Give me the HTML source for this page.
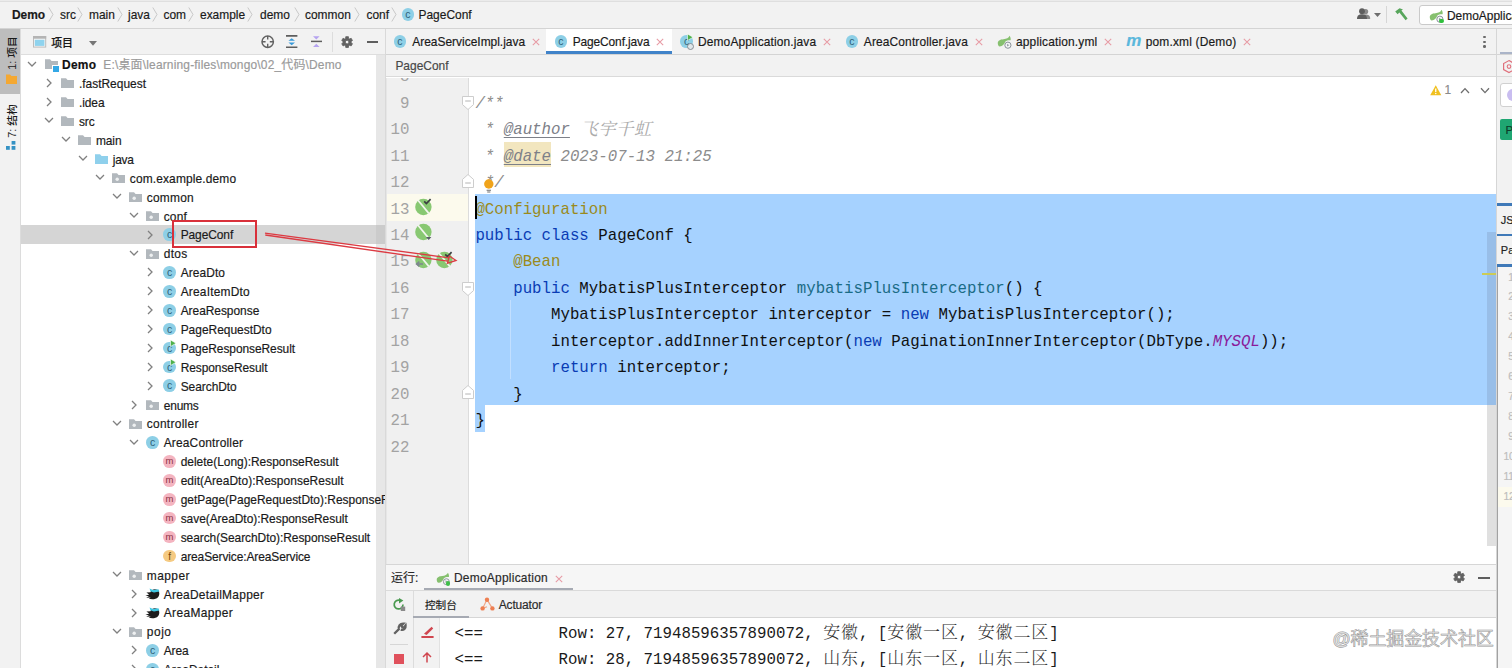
<!DOCTYPE html>
<html lang="zh-CN"><head><meta charset="utf-8"><title>PageConf - Demo</title>
<style>
*{box-sizing:border-box;margin:0;padding:0}
html,body{width:1512px;height:668px;overflow:hidden;background:#fff}
body{position:relative;font-family:"Liberation Sans","Noto Sans CJK SC",sans-serif;font-size:12px;color:#1c1c1c}
.a{position:absolute}
.t{position:absolute;white-space:pre;line-height:16px;height:16px;-webkit-text-stroke:0.18px currentColor}
svg{position:absolute;overflow:visible}
.mono{font-family:"Liberation Mono","Noto Serif CJK SC",monospace}
.ln{position:absolute;left:386px;width:22.5px;text-align:right;font-family:"Liberation Mono","Noto Serif CJK SC",monospace;font-size:15.75px;color:#a3a3a3;line-height:26.45px;height:26.45px;white-space:pre}
.cl{position:absolute;left:475.4px;font-family:"Liberation Mono","Noto Serif CJK SC",monospace;font-size:15.75px;color:#101010;line-height:26.45px;height:26.45px;white-space:pre}
.k{color:#0a3cb4}.an{color:#9a8a1c}.m{color:#1a6c86}.c{color:#8c8c8c;font-style:italic}.p{color:#8a1a9a;font-style:italic}
.tag{text-decoration:underline;text-decoration-skip-ink:none;text-underline-offset:3.2px;text-decoration-thickness:1.2px;color:#7d8088;font-style:italic}
.co{position:absolute;left:454.6px;font-family:"Liberation Mono","Noto Serif CJK SC",monospace;font-size:15.75px;color:#1a1a1a;line-height:26px;height:26px;white-space:pre}
.cj{font-family:"Noto Serif CJK SC",serif;font-size:17px;letter-spacing:0.86px;color:#333;font-weight:300}
.x{position:absolute;width:8px;height:8px}
</style></head>
<body>
<div class="a" style="left:0px;top:0px;width:1512px;height:28px;background:#f2f2f2;"></div>
<div class="a" style="left:0px;top:0px;width:1512px;height:1px;background:#ebebeb;"></div>
<div class="a" style="left:0px;top:1px;width:1512px;height:1px;background:#dfdfdf;"></div>
<div class="a" style="left:0px;top:28px;width:1512px;height:1px;background:#d4d4d4;"></div>
<div class="t" style="left:12px;top:6.5px;font-size:11.95px;color:#1a1a1a;font-weight:bold;">Demo</div>
<div class="t" style="left:60px;top:6.5px;font-size:11.95px;color:#1a1a1a;">src</div>
<div class="t" style="left:89px;top:6.5px;font-size:11.95px;color:#1a1a1a;">main</div>
<div class="t" style="left:128px;top:6.5px;font-size:11.95px;color:#1a1a1a;">java</div>
<div class="t" style="left:163.5px;top:6.5px;font-size:11.95px;color:#1a1a1a;">com</div>
<div class="t" style="left:200px;top:6.5px;font-size:11.95px;color:#1a1a1a;">example</div>
<div class="t" style="left:260px;top:6.5px;font-size:11.95px;color:#1a1a1a;">demo</div>
<div class="t" style="left:305px;top:6.5px;font-size:11.95px;color:#1a1a1a;">common</div>
<div class="t" style="left:366.5px;top:6.5px;font-size:11.95px;color:#1a1a1a;">conf</div>
<svg style="left:48px;top:7px" width="6" height="15" viewBox="0 0 6 15"><path d="M0.8 0.5 L5 7.5 L0.8 14.5" fill="none" stroke="#c3c3c3" stroke-width="0.9"/></svg>
<svg style="left:77px;top:7px" width="6" height="15" viewBox="0 0 6 15"><path d="M0.8 0.5 L5 7.5 L0.8 14.5" fill="none" stroke="#c3c3c3" stroke-width="0.9"/></svg>
<svg style="left:117px;top:7px" width="6" height="15" viewBox="0 0 6 15"><path d="M0.8 0.5 L5 7.5 L0.8 14.5" fill="none" stroke="#c3c3c3" stroke-width="0.9"/></svg>
<svg style="left:152px;top:7px" width="6" height="15" viewBox="0 0 6 15"><path d="M0.8 0.5 L5 7.5 L0.8 14.5" fill="none" stroke="#c3c3c3" stroke-width="0.9"/></svg>
<svg style="left:188.2px;top:7px" width="6" height="15" viewBox="0 0 6 15"><path d="M0.8 0.5 L5 7.5 L0.8 14.5" fill="none" stroke="#c3c3c3" stroke-width="0.9"/></svg>
<svg style="left:246.6px;top:7px" width="6" height="15" viewBox="0 0 6 15"><path d="M0.8 0.5 L5 7.5 L0.8 14.5" fill="none" stroke="#c3c3c3" stroke-width="0.9"/></svg>
<svg style="left:293.6px;top:7px" width="6" height="15" viewBox="0 0 6 15"><path d="M0.8 0.5 L5 7.5 L0.8 14.5" fill="none" stroke="#c3c3c3" stroke-width="0.9"/></svg>
<svg style="left:354.4px;top:7px" width="6" height="15" viewBox="0 0 6 15"><path d="M0.8 0.5 L5 7.5 L0.8 14.5" fill="none" stroke="#c3c3c3" stroke-width="0.9"/></svg>
<svg style="left:391.2px;top:7px" width="6" height="15" viewBox="0 0 6 15"><path d="M0.8 0.5 L5 7.5 L0.8 14.5" fill="none" stroke="#c3c3c3" stroke-width="0.9"/></svg>
<div class="a" style="left:401.5px;top:8.1px;width:12.8px;height:12.8px;border-radius:50%;background:#8dcfe6;color:#2d5f78;font-size:10.5px;line-height:13.8px;text-align:center">c</div>
<div class="t" style="left:418.5px;top:6.5px;font-size:11.95px;color:#1a1a1a;">PageConf</div>
<svg style="left:1357px;top:8px" width="14" height="12" viewBox="0 0 14 12"><circle cx="8.6" cy="3.6" r="2.6" fill="#8a8a8a"/><path d="M4 11 C4 7.6 6 6.6 8.6 6.6 C11.4 6.6 13.2 7.6 13.2 11 Z" fill="#8a8a8a"/><circle cx="5" cy="3.2" r="2.9" fill="#5e5e5e"/><path d="M0 11 C0 7.2 2.2 6.2 5 6.2 C7.8 6.2 10 7.2 10 11 Z" fill="#5e5e5e"/></svg>
<svg style="left:1374px;top:13px" width="7" height="4" viewBox="0 0 7 4"><path d="M0 0 H7 L3.5 4 Z" fill="#6e6e6e"/></svg>
<div class="a" style="left:1385.5px;top:6px;width:1px;height:17px;background:#d6d6d6;"></div>
<svg style="left:1393px;top:7px" width="16" height="15" viewBox="0 0 16 15"><path d="M2.2 4.6 L6.6 1.2 L10 2.4 L8.4 3.6 L14.6 11.4 L12.6 13.2 L6.4 5.6 L4.6 7.2 Z" fill="#58a65c"/></svg>
<div class="a" style="left:1419px;top:5px;width:110px;height:20.4px;background:#fff;border:1px solid #cacaca;border-radius:3px"></div>
<svg style="left:1428.5px;top:9px" width="16" height="14" viewBox="0 0 16 14"><path d="M0.8 8.4 C0.6 5.8 3 4.4 6.4 4.2 C9.6 4 11.6 3 12.6 0.8 C13.6 2.4 13.9 4 13.6 5.2 C11.4 5 9.6 5.4 8.4 6.6 C7.2 9.4 5.4 11.4 2.8 11.4 C1.5 11.2 0.9 10 0.8 8.4 Z" fill="#86c06f"/><circle cx="10.9" cy="10.2" r="3.1" fill="#f4f6f6" stroke="#8a9299" stroke-width="1"/><path d="M10 8.8 L12.4 10.2 L10 11.6 Z" fill="#9aa2a8"/></svg>
<div class="a" style="left:1439.2px;top:18.7px;width:4.6px;height:4.6px;background:#2fc03c;border-radius:50%"></div>
<div class="t" style="left:1447px;top:7.5px;font-size:11.95px;color:#1a1a1a;">DemoApplication</div>
<div class="a" style="left:0px;top:29px;width:20.5px;height:639px;background:#f2f2f2;"></div>
<div class="a" style="left:0px;top:29px;width:20.5px;height:65px;background:#bdbdbd;"></div>
<div class="a" style="left:20px;top:29px;width:1px;height:639px;background:#dcdcdc;"></div>
<div class="a" style="left:0;top:36px;width:20px;height:33px;"><div style="position:absolute;left:11.6px;top:16.5px;transform:translate(-50%,-50%) rotate(-90deg);white-space:pre;font-size:10.7px;color:#1a1a1a;line-height:14px;font-weight:500">1: 项目</div></div>
<svg style="left:5.5px;top:74px" width="11" height="10" viewBox="0 0 11 10"><path d="M0 0.5 H4 L5.4 2 H11 V10 H0 Z" fill="#f4a832"/></svg>
<div class="a" style="left:0;top:104px;width:20px;height:33px;"><div style="position:absolute;left:11.6px;top:16.5px;transform:translate(-50%,-50%) rotate(-90deg);white-space:pre;font-size:10.7px;color:#1a1a1a;line-height:14px;font-weight:500">7: 结构</div></div>
<svg style="left:6.3px;top:141px" width="10" height="9" viewBox="0 0 10 9"><rect x="5.6" y="0" width="3.8" height="3.6" fill="#3592c4"/><rect x="0" y="5" width="3.8" height="3.8" fill="#3592c4"/><rect x="5.6" y="5" width="3.8" height="3.8" fill="#3592c4"/></svg>
<div class="a" style="left:21px;top:29px;width:364px;height:25.5px;background:#f2f2f2;"></div>
<div class="a" style="left:21px;top:54px;width:364px;height:1px;background:#dedede;"></div>
<svg style="left:33px;top:36.2px" width="13.2" height="11.6" viewBox="0 0 13.2 11.6"><rect x="0.5" y="0.5" width="12.2" height="10.6" fill="#f4f4f4" stroke="#bcbcbc" stroke-width="1"/><rect x="0" y="0" width="13.2" height="2.7" fill="#b4b4b4"/><rect x="1.8" y="3.8" width="9.6" height="6.1" fill="#8fd3ee"/></svg>
<div class="t" style="left:51.2px;top:34.9px;font-size:10.9px;color:#1a1a1a;font-weight:500;">项目</div>
<svg style="left:88.8px;top:40.6px" width="8" height="4.8" viewBox="0 0 8 4.8"><path d="M0 0 H8 L4 4.8 Z" fill="#767676"/></svg>
<svg style="left:260.8px;top:35px" width="13.4" height="13.4" viewBox="0 0 13.4 13.4"><circle cx="6.7" cy="6.7" r="5.7" fill="none" stroke="#626262" stroke-width="1.5"/><path d="M6.7 1 V4.6 M6.7 8.8 V12.4 M1 6.7 H4.6 M8.8 6.7 H12.4" stroke="#626262" stroke-width="1.4"/></svg>
<svg style="left:286.3px;top:35px" width="11.4" height="13" viewBox="0 0 11.4 13"><path d="M0 0.9 H11.4 M0 12.2 H11.4" stroke="#5e5e5e" stroke-width="1.6"/><path d="M5.7 3.2 L9 5.7 H2.4 Z M5.7 10.2 L9 7.6 H2.4 Z" fill="#3a9ad9"/></svg>
<svg style="left:311px;top:35px" width="11" height="13" viewBox="0 0 11 13"><path d="M0 6.4 H11" stroke="#5e5e5e" stroke-width="1.5"/><path d="M2 1.2 H8.6 L5.3 4.4 Z M2 12 H8.6 L5.3 8.7 Z" fill="#b5a3f0"/></svg>
<div class="a" style="left:332px;top:31.7px;width:1px;height:20px;background:#dddddd;"></div>
<svg style="left:341.3px;top:35.7px" width="12.2" height="12.2" viewBox="0 0 12.2 12.2"><path d="M4.66 2.26 L4.77 0.66 L7.43 0.66 L7.54 2.26 L8.70 2.93 L10.15 2.23 L11.48 4.53 L10.15 5.43 L10.15 6.77 L11.48 7.67 L10.15 9.97 L8.70 9.27 L7.54 9.94 L7.43 11.54 L4.77 11.54 L4.66 9.94 L3.50 9.27 L2.05 9.97 L0.72 7.67 L2.05 6.77 L2.05 5.43 L0.72 4.53 L2.05 2.23 L3.50 2.93 Z M4.30 6.10 a1.80 1.80 0 1 0 3.60 0 a1.80 1.80 0 1 0 -3.60 0 Z" fill="#626262" fill-rule="evenodd" stroke="#626262" stroke-width="0.8" stroke-linejoin="round"/></svg>
<div class="a" style="left:366.5px;top:41px;width:11.7px;height:2px;background:#5e5e5e;"></div>
<div class="a" style="left:21px;top:55px;width:355px;height:613px;background:#fff;"></div>
<div class="a" style="left:375.6px;top:55px;width:9.4px;height:613px;background:#e7e7e7;"></div>
<div class="a" style="left:385px;top:29px;width:1px;height:639px;background:#d9d9d9;"></div>
<div class="a" style="left:21px;top:225.3px;width:364px;height:18.4px;background:#d5d5d5;"></div>
<div class="a" style="left:376px;top:225.3px;width:9px;height:18.4px;background:#cbcbcb;"></div>
<div class="a" style="left:21px;top:55px;width:364px;height:613px;overflow:hidden">
<svg style="left:5.8px;top:3.7px" width="10" height="10" viewBox="0 0 10 10"><path d="M1 3 L5 7 L9 3" fill="none" stroke="#808080" stroke-width="1.25"/></svg>
<svg style="left:23.5px;top:3px" width="13" height="12" viewBox="0 0 13 12"><path d="M0 1.2 H5 L6.6 3 H13 V11 H0 Z" fill="#b2b8bd"/></svg>
<div class="a" style="left:31px;top:10.3px;width:5.5px;height:5.5px;background:#34a8e6;border:0.8px solid #fff;box-sizing:content-box"></div>
<div class="t" style="left:41px;top:2.1px;font-size:11.95px;color:#111;"><b style="letter-spacing:0.3px">Demo</b><span style="color:#9a9a9a;font-weight:normal;letter-spacing:0.18px">  E:\桌面\learning-files\mongo\02_代码\Demo</span></div>
<svg style="left:22.75px;top:23.4px" width="10" height="10" viewBox="0 0 10 10"><path d="M3 1 L7 5 L3 9" fill="none" stroke="#808080" stroke-width="1.3"/></svg>
<svg style="left:40.45px;top:22.4px" width="13" height="12" viewBox="0 0 13 12"><path d="M0 1.2 H5 L6.6 3 H13 V11 H0 Z" fill="#b2b8bd"/></svg>
<div class="t" style="left:57.95px;top:21.2px;font-size:11.95px;color:#1a1a1a;">.fastRequest</div>
<svg style="left:22.75px;top:42.3px" width="10" height="10" viewBox="0 0 10 10"><path d="M3 1 L7 5 L3 9" fill="none" stroke="#808080" stroke-width="1.3"/></svg>
<svg style="left:40.45px;top:41.3px" width="13" height="12" viewBox="0 0 13 12"><path d="M0 1.2 H5 L6.6 3 H13 V11 H0 Z" fill="#b2b8bd"/></svg>
<div class="t" style="left:57.95px;top:40.1px;font-size:11.95px;color:#1a1a1a;letter-spacing:-0.06px;">.idea</div>
<svg style="left:22.75px;top:60.4px" width="10" height="10" viewBox="0 0 10 10"><path d="M1 3 L5 7 L9 3" fill="none" stroke="#808080" stroke-width="1.25"/></svg>
<svg style="left:40.45px;top:60.2px" width="13" height="12" viewBox="0 0 13 12"><path d="M0 1.2 H5 L6.6 3 H13 V11 H0 Z" fill="#b2b8bd"/></svg>
<div class="t" style="left:57.95px;top:59px;font-size:11.95px;color:#1a1a1a;letter-spacing:-0.11px;">src</div>
<svg style="left:39.7px;top:79.3px" width="10" height="10" viewBox="0 0 10 10"><path d="M1 3 L5 7 L9 3" fill="none" stroke="#808080" stroke-width="1.25"/></svg>
<svg style="left:57.4px;top:79.1px" width="13" height="12" viewBox="0 0 13 12"><path d="M0 1.2 H5 L6.6 3 H13 V11 H0 Z" fill="#b2b8bd"/></svg>
<div class="t" style="left:74.9px;top:77.9px;font-size:11.95px;color:#1a1a1a;letter-spacing:-0.08px;">main</div>
<svg style="left:56.65px;top:98.2px" width="10" height="10" viewBox="0 0 10 10"><path d="M1 3 L5 7 L9 3" fill="none" stroke="#808080" stroke-width="1.25"/></svg>
<svg style="left:74.35px;top:98px" width="13" height="12" viewBox="0 0 13 12"><path d="M0 1.2 H5 L6.6 3 H13 V11 H0 Z" fill="#8fd0ec"/></svg>
<div class="t" style="left:91.85px;top:96.8px;font-size:11.95px;color:#1a1a1a;letter-spacing:-0.31px;">java</div>
<svg style="left:73.6px;top:117.1px" width="10" height="10" viewBox="0 0 10 10"><path d="M1 3 L5 7 L9 3" fill="none" stroke="#808080" stroke-width="1.25"/></svg>
<svg style="left:91.3px;top:116.9px" width="13" height="12" viewBox="0 0 13 12"><path d="M0 1.2 H5 L6.6 3 H13 V11 H0 Z" fill="#b2b8bd"/><circle cx="5.2" cy="7.2" r="1.7" fill="#eef0f1"/></svg>
<div class="t" style="left:108.8px;top:115.7px;font-size:11.95px;color:#1a1a1a;letter-spacing:0.14px;">com.example.demo</div>
<svg style="left:90.55px;top:136px" width="10" height="10" viewBox="0 0 10 10"><path d="M1 3 L5 7 L9 3" fill="none" stroke="#808080" stroke-width="1.25"/></svg>
<svg style="left:108.25px;top:135.8px" width="13" height="12" viewBox="0 0 13 12"><path d="M0 1.2 H5 L6.6 3 H13 V11 H0 Z" fill="#b2b8bd"/><circle cx="5.2" cy="7.2" r="1.7" fill="#eef0f1"/></svg>
<div class="t" style="left:125.75px;top:134.6px;font-size:11.95px;color:#1a1a1a;letter-spacing:0.23px;">common</div>
<svg style="left:107.5px;top:154.9px" width="10" height="10" viewBox="0 0 10 10"><path d="M1 3 L5 7 L9 3" fill="none" stroke="#808080" stroke-width="1.25"/></svg>
<svg style="left:125.2px;top:154.7px" width="13" height="12" viewBox="0 0 13 12"><path d="M0 1.2 H5 L6.6 3 H13 V11 H0 Z" fill="#b2b8bd"/><circle cx="5.2" cy="7.2" r="1.7" fill="#eef0f1"/></svg>
<div class="t" style="left:142.7px;top:153.5px;font-size:11.95px;color:#1a1a1a;letter-spacing:0.20px;">conf</div>
<svg style="left:124.45px;top:174.6px" width="10" height="10" viewBox="0 0 10 10"><path d="M3 1 L7 5 L3 9" fill="none" stroke="#808080" stroke-width="1.3"/></svg>
<div class="a" style="left:142.15px;top:173.2px;width:12.8px;height:12.8px;border-radius:50%;background:#8dcfe6;color:#2d5f78;font-size:10.5px;line-height:13.8px;text-align:center">c</div>
<div class="t" style="left:159.65px;top:172.4px;font-size:11.95px;color:#1a1a1a;letter-spacing:-0.07px;">PageConf</div>
<svg style="left:107.5px;top:192.7px" width="10" height="10" viewBox="0 0 10 10"><path d="M1 3 L5 7 L9 3" fill="none" stroke="#808080" stroke-width="1.25"/></svg>
<svg style="left:125.2px;top:192.5px" width="13" height="12" viewBox="0 0 13 12"><path d="M0 1.2 H5 L6.6 3 H13 V11 H0 Z" fill="#b2b8bd"/><circle cx="5.2" cy="7.2" r="1.7" fill="#eef0f1"/></svg>
<div class="t" style="left:142.7px;top:191.3px;font-size:11.95px;color:#1a1a1a;letter-spacing:0.35px;">dtos</div>
<svg style="left:124.45px;top:212.4px" width="10" height="10" viewBox="0 0 10 10"><path d="M3 1 L7 5 L3 9" fill="none" stroke="#808080" stroke-width="1.3"/></svg>
<div class="a" style="left:142.15px;top:211px;width:12.8px;height:12.8px;border-radius:50%;background:#8dcfe6;color:#2d5f78;font-size:10.5px;line-height:13.8px;text-align:center">c</div>
<div class="t" style="left:159.65px;top:210.2px;font-size:11.95px;color:#1a1a1a;letter-spacing:0.09px;">AreaDto</div>
<svg style="left:124.45px;top:231.3px" width="10" height="10" viewBox="0 0 10 10"><path d="M3 1 L7 5 L3 9" fill="none" stroke="#808080" stroke-width="1.3"/></svg>
<div class="a" style="left:142.15px;top:229.9px;width:12.8px;height:12.8px;border-radius:50%;background:#8dcfe6;color:#2d5f78;font-size:10.5px;line-height:13.8px;text-align:center">c</div>
<div class="t" style="left:159.65px;top:229.1px;font-size:11.95px;color:#1a1a1a;letter-spacing:0.20px;">AreaItemDto</div>
<svg style="left:124.45px;top:250.2px" width="10" height="10" viewBox="0 0 10 10"><path d="M3 1 L7 5 L3 9" fill="none" stroke="#808080" stroke-width="1.3"/></svg>
<div class="a" style="left:142.15px;top:248.8px;width:12.8px;height:12.8px;border-radius:50%;background:#8dcfe6;color:#2d5f78;font-size:10.5px;line-height:13.8px;text-align:center">c</div>
<div class="t" style="left:159.65px;top:248px;font-size:11.95px;color:#1a1a1a;letter-spacing:-0.03px;">AreaResponse</div>
<svg style="left:124.45px;top:269.1px" width="10" height="10" viewBox="0 0 10 10"><path d="M3 1 L7 5 L3 9" fill="none" stroke="#808080" stroke-width="1.3"/></svg>
<div class="a" style="left:142.15px;top:267.7px;width:12.8px;height:12.8px;border-radius:50%;background:#8dcfe6;color:#2d5f78;font-size:10.5px;line-height:13.8px;text-align:center">c</div>
<div class="t" style="left:159.65px;top:266.9px;font-size:11.95px;color:#1a1a1a;">PageRequestDto</div>
<svg style="left:124.45px;top:288px" width="10" height="10" viewBox="0 0 10 10"><path d="M3 1 L7 5 L3 9" fill="none" stroke="#808080" stroke-width="1.3"/></svg>
<div class="a" style="left:142.15px;top:286.6px;width:12.8px;height:12.8px;border-radius:50%;background:#8dcfe6;color:#2d5f78;font-size:10.5px;line-height:13.8px;text-align:center">c</div>
<svg style="left:149.15px;top:285px" width="6" height="7" viewBox="0 0 6 7"><path d="M0.5 0 L6 3.2 L0.5 6.6 Z" fill="#4fb04a" stroke="#fff" stroke-width="0.6"/></svg>
<div class="t" style="left:159.65px;top:285.8px;font-size:11.95px;color:#1a1a1a;letter-spacing:-0.06px;">PageResponseResult</div>
<svg style="left:124.45px;top:306.9px" width="10" height="10" viewBox="0 0 10 10"><path d="M3 1 L7 5 L3 9" fill="none" stroke="#808080" stroke-width="1.3"/></svg>
<div class="a" style="left:142.15px;top:305.5px;width:12.8px;height:12.8px;border-radius:50%;background:#8dcfe6;color:#2d5f78;font-size:10.5px;line-height:13.8px;text-align:center">c</div>
<svg style="left:149.15px;top:303.9px" width="6" height="7" viewBox="0 0 6 7"><path d="M0.5 0 L6 3.2 L0.5 6.6 Z" fill="#4fb04a" stroke="#fff" stroke-width="0.6"/></svg>
<div class="t" style="left:159.65px;top:304.7px;font-size:11.95px;color:#1a1a1a;letter-spacing:-0.06px;">ResponseResult</div>
<svg style="left:124.45px;top:325.8px" width="10" height="10" viewBox="0 0 10 10"><path d="M3 1 L7 5 L3 9" fill="none" stroke="#808080" stroke-width="1.3"/></svg>
<div class="a" style="left:142.15px;top:324.4px;width:12.8px;height:12.8px;border-radius:50%;background:#8dcfe6;color:#2d5f78;font-size:10.5px;line-height:13.8px;text-align:center">c</div>
<div class="t" style="left:159.65px;top:323.6px;font-size:11.95px;color:#1a1a1a;letter-spacing:-0.04px;">SearchDto</div>
<svg style="left:107.5px;top:344.7px" width="10" height="10" viewBox="0 0 10 10"><path d="M3 1 L7 5 L3 9" fill="none" stroke="#808080" stroke-width="1.3"/></svg>
<svg style="left:125.2px;top:343.7px" width="13" height="12" viewBox="0 0 13 12"><path d="M0 1.2 H5 L6.6 3 H13 V11 H0 Z" fill="#b2b8bd"/><circle cx="5.2" cy="7.2" r="1.7" fill="#eef0f1"/></svg>
<div class="t" style="left:142.7px;top:342.5px;font-size:11.95px;color:#1a1a1a;letter-spacing:-0.17px;">enums</div>
<svg style="left:90.55px;top:362.8px" width="10" height="10" viewBox="0 0 10 10"><path d="M1 3 L5 7 L9 3" fill="none" stroke="#808080" stroke-width="1.25"/></svg>
<svg style="left:108.25px;top:362.6px" width="13" height="12" viewBox="0 0 13 12"><path d="M0 1.2 H5 L6.6 3 H13 V11 H0 Z" fill="#b2b8bd"/><circle cx="5.2" cy="7.2" r="1.7" fill="#eef0f1"/></svg>
<div class="t" style="left:125.75px;top:361.4px;font-size:11.95px;color:#1a1a1a;letter-spacing:0.29px;">controller</div>
<svg style="left:107.5px;top:381.7px" width="10" height="10" viewBox="0 0 10 10"><path d="M1 3 L5 7 L9 3" fill="none" stroke="#808080" stroke-width="1.25"/></svg>
<div class="a" style="left:125.2px;top:381.1px;width:12.8px;height:12.8px;border-radius:50%;background:#8dcfe6;color:#2d5f78;font-size:10.5px;line-height:13.8px;text-align:center">c</div>
<div class="t" style="left:142.7px;top:380.3px;font-size:11.95px;color:#1a1a1a;letter-spacing:0.18px;">AreaController</div>
<div class="a" style="left:142.15px;top:400px;width:12.8px;height:12.8px;border-radius:50%;background:#f4b4c0;color:#8c3346;font-size:9.5px;line-height:12.2px;text-align:center">m</div>
<div class="t" style="left:159.65px;top:399.2px;font-size:11.95px;color:#1a1a1a;">delete(Long):ResponseResult</div>
<div class="a" style="left:142.15px;top:418.9px;width:12.8px;height:12.8px;border-radius:50%;background:#f4b4c0;color:#8c3346;font-size:9.5px;line-height:12.2px;text-align:center">m</div>
<div class="t" style="left:159.65px;top:418.1px;font-size:11.95px;color:#1a1a1a;letter-spacing:0.04px;">edit(AreaDto):ResponseResult</div>
<div class="a" style="left:142.15px;top:437.8px;width:12.8px;height:12.8px;border-radius:50%;background:#f4b4c0;color:#8c3346;font-size:9.5px;line-height:12.2px;text-align:center">m</div>
<div class="t" style="left:159.65px;top:437px;font-size:11.95px;color:#1a1a1a;">getPage(PageRequestDto):ResponseResult</div>
<div class="a" style="left:142.15px;top:456.7px;width:12.8px;height:12.8px;border-radius:50%;background:#f4b4c0;color:#8c3346;font-size:9.5px;line-height:12.2px;text-align:center">m</div>
<div class="t" style="left:159.65px;top:455.9px;font-size:11.95px;color:#1a1a1a;letter-spacing:-0.03px;">save(AreaDto):ResponseResult</div>
<div class="a" style="left:142.15px;top:475.6px;width:12.8px;height:12.8px;border-radius:50%;background:#f4b4c0;color:#8c3346;font-size:9.5px;line-height:12.2px;text-align:center">m</div>
<div class="t" style="left:159.65px;top:474.8px;font-size:11.95px;color:#1a1a1a;letter-spacing:-0.05px;">search(SearchDto):ResponseResult</div>
<div class="a" style="left:142.15px;top:494.5px;width:12.8px;height:12.8px;border-radius:50%;background:#f5ca82;color:#7a4c0c;font-size:10px;line-height:13.6px;text-align:center">f</div>
<div class="t" style="left:159.65px;top:493.7px;font-size:11.95px;color:#1a1a1a;letter-spacing:-0.10px;">areaService:AreaService</div>
<svg style="left:90.55px;top:514px" width="10" height="10" viewBox="0 0 10 10"><path d="M1 3 L5 7 L9 3" fill="none" stroke="#808080" stroke-width="1.25"/></svg>
<svg style="left:108.25px;top:513.8px" width="13" height="12" viewBox="0 0 13 12"><path d="M0 1.2 H5 L6.6 3 H13 V11 H0 Z" fill="#b2b8bd"/><circle cx="5.2" cy="7.2" r="1.7" fill="#eef0f1"/></svg>
<div class="t" style="left:125.75px;top:512.6px;font-size:11.95px;color:#1a1a1a;letter-spacing:0.45px;">mapper</div>
<svg style="left:107.5px;top:533.7px" width="10" height="10" viewBox="0 0 10 10"><path d="M3 1 L7 5 L3 9" fill="none" stroke="#808080" stroke-width="1.3"/></svg>
<svg style="left:124.4px;top:532.1px" width="15" height="13" viewBox="0 0 15 13"><path d="M0.4 8.8 L4.2 7.4 L1.4 5.6 L5.4 5.2 C6.4 2.4 10 1.2 12.6 3 C14.8 4.6 14.8 8.2 13 10.2 C11 12.4 6.6 12.8 3.8 11.6 L5.8 10.4 L1.2 10.8 L4 9.2 Z" fill="#1c1c1c"/><path d="M4.6 1.6 L8 3 L13.4 2.2 L14.4 4.6 L9 5.4 L5.4 4.2 Z" fill="#3fc6e2"/></svg>
<div class="t" style="left:142.7px;top:531.5px;font-size:11.95px;color:#1a1a1a;letter-spacing:0.27px;">AreaDetailMapper</div>
<svg style="left:107.5px;top:552.6px" width="10" height="10" viewBox="0 0 10 10"><path d="M3 1 L7 5 L3 9" fill="none" stroke="#808080" stroke-width="1.3"/></svg>
<svg style="left:124.4px;top:551px" width="15" height="13" viewBox="0 0 15 13"><path d="M0.4 8.8 L4.2 7.4 L1.4 5.6 L5.4 5.2 C6.4 2.4 10 1.2 12.6 3 C14.8 4.6 14.8 8.2 13 10.2 C11 12.4 6.6 12.8 3.8 11.6 L5.8 10.4 L1.2 10.8 L4 9.2 Z" fill="#1c1c1c"/><path d="M4.6 1.6 L8 3 L13.4 2.2 L14.4 4.6 L9 5.4 L5.4 4.2 Z" fill="#3fc6e2"/></svg>
<div class="t" style="left:142.7px;top:550.4px;font-size:11.95px;color:#1a1a1a;letter-spacing:0.38px;">AreaMapper</div>
<svg style="left:90.55px;top:570.7px" width="10" height="10" viewBox="0 0 10 10"><path d="M1 3 L5 7 L9 3" fill="none" stroke="#808080" stroke-width="1.25"/></svg>
<svg style="left:108.25px;top:570.5px" width="13" height="12" viewBox="0 0 13 12"><path d="M0 1.2 H5 L6.6 3 H13 V11 H0 Z" fill="#b2b8bd"/><circle cx="5.2" cy="7.2" r="1.7" fill="#eef0f1"/></svg>
<div class="t" style="left:125.75px;top:569.3px;font-size:11.95px;color:#1a1a1a;letter-spacing:0.55px;">pojo</div>
<svg style="left:107.5px;top:590.4px" width="10" height="10" viewBox="0 0 10 10"><path d="M3 1 L7 5 L3 9" fill="none" stroke="#808080" stroke-width="1.3"/></svg>
<div class="a" style="left:125.2px;top:589px;width:12.8px;height:12.8px;border-radius:50%;background:#8dcfe6;color:#2d5f78;font-size:10.5px;line-height:13.8px;text-align:center">c</div>
<div class="t" style="left:142.7px;top:588.2px;font-size:11.95px;color:#1a1a1a;letter-spacing:-0.11px;">Area</div>
<svg style="left:107.5px;top:609.3px" width="10" height="10" viewBox="0 0 10 10"><path d="M3 1 L7 5 L3 9" fill="none" stroke="#808080" stroke-width="1.3"/></svg>
<div class="a" style="left:125.2px;top:607.9px;width:12.8px;height:12.8px;border-radius:50%;background:#8dcfe6;color:#2d5f78;font-size:10.5px;line-height:13.8px;text-align:center">c</div>
<div class="t" style="left:142.7px;top:607.1px;font-size:11.95px;color:#1a1a1a;">AreaDetail</div>
</div>
<div class="a" style="left:386px;top:29px;width:1111px;height:25px;background:#f2f2f2;"></div>
<div class="a" style="left:386px;top:54px;width:1111px;height:1px;background:#d4d4d4;"></div>
<div class="a" style="left:546.3px;top:29px;width:125.7px;height:22.5px;background:#ffffff;"></div>
<div class="a" style="left:546.3px;top:51.2px;width:125.7px;height:3px;background:#4083c9;"></div>
<div class="a" style="left:393.6px;top:35.4px;width:12.8px;height:12.8px;border-radius:50%;background:#8dcfe6;color:#2d5f78;font-size:10.5px;line-height:13.8px;text-align:center">c</div>
<div class="t" style="left:412.3px;top:34.2px;font-size:11.95px;color:#1a1a1a;">AreaServiceImpl.java</div>
<svg style="left:531.8px;top:37.8px" width="8" height="8" viewBox="0 0 8 8"><path d="M0.8 0.8 L7.2 7.2 M7.2 0.8 L0.8 7.2" stroke="#e79aa4" stroke-width="1.05" fill="none"/></svg>
<div class="a" style="left:554.6px;top:35.4px;width:12.8px;height:12.8px;border-radius:50%;background:#8dcfe6;color:#2d5f78;font-size:10.5px;line-height:13.8px;text-align:center">c</div>
<div class="t" style="left:572.7px;top:34.2px;font-size:11.95px;color:#1a1a1a;letter-spacing:-0.12px;">PageConf.java</div>
<svg style="left:656px;top:37.8px" width="8" height="8" viewBox="0 0 8 8"><path d="M0.8 0.8 L7.2 7.2 M7.2 0.8 L0.8 7.2" stroke="#e79aa4" stroke-width="1.05" fill="none"/></svg>
<div class="a" style="left:680.3px;top:35.4px;width:12.8px;height:12.8px;border-radius:50%;background:#8dcfe6;color:#2d5f78;font-size:10.5px;line-height:13.8px;text-align:center">c</div>
<svg style="left:687.3px;top:33.8px" width="6" height="7" viewBox="0 0 6 7"><path d="M0.5 0 L6 3.2 L0.5 6.6 Z" fill="#4fb04a" stroke="#fff" stroke-width="0.6"/></svg>
<svg style="left:687.2px;top:42.5px" width="7" height="7" viewBox="0 0 7 7"><circle cx="3.5" cy="3.5" r="3" fill="#dfe7ea" stroke="#7d858c" stroke-width="0.9"/></svg>
<div class="t" style="left:698px;top:34.2px;font-size:11.95px;color:#1a1a1a;letter-spacing:0.14px;">DemoApplication.java</div>
<svg style="left:822.8px;top:37.8px" width="8" height="8" viewBox="0 0 8 8"><path d="M0.8 0.8 L7.2 7.2 M7.2 0.8 L0.8 7.2" stroke="#e79aa4" stroke-width="1.05" fill="none"/></svg>
<div class="a" style="left:845.6px;top:35.4px;width:12.8px;height:12.8px;border-radius:50%;background:#8dcfe6;color:#2d5f78;font-size:10.5px;line-height:13.8px;text-align:center">c</div>
<div class="t" style="left:863.8px;top:34.2px;font-size:11.95px;color:#1a1a1a;letter-spacing:0.14px;">AreaController.java</div>
<svg style="left:974.9px;top:37.8px" width="8" height="8" viewBox="0 0 8 8"><path d="M0.8 0.8 L7.2 7.2 M7.2 0.8 L0.8 7.2" stroke="#e79aa4" stroke-width="1.05" fill="none"/></svg>
<svg style="left:997px;top:35px" width="16" height="14" viewBox="0 0 16 14"><path d="M0.8 8.4 C0.6 5.8 3 4.4 6.4 4.2 C9.6 4 11.6 3 12.6 0.8 C13.6 2.4 13.9 4 13.6 5.2 C11.4 5 9.6 5.4 8.4 6.6 C7.2 9.4 5.4 11.4 2.8 11.4 C1.5 11.2 0.9 10 0.8 8.4 Z" fill="#86c06f"/><circle cx="10.9" cy="10.2" r="3.1" fill="#f4f6f6" stroke="#8a9299" stroke-width="1"/><path d="M10 8.8 L12.4 10.2 L10 11.6 Z" fill="#9aa2a8"/></svg>
<div class="t" style="left:1016px;top:34.2px;font-size:11.95px;color:#1a1a1a;letter-spacing:0.16px;">application.yml</div>
<svg style="left:1104px;top:37.8px" width="8" height="8" viewBox="0 0 8 8"><path d="M0.8 0.8 L7.2 7.2 M7.2 0.8 L0.8 7.2" stroke="#e79aa4" stroke-width="1.05" fill="none"/></svg>
<div class="t" style="left:1126.3px;top:32.5px;font-size:17px;font-weight:bold;font-style:italic;color:#5bb8dc;line-height:16px">m</div>
<div class="t" style="left:1145.7px;top:34.2px;font-size:11.95px;color:#1a1a1a;letter-spacing:0.18px;">pom.xml (Demo)</div>
<svg style="left:1243px;top:37.8px" width="8" height="8" viewBox="0 0 8 8"><path d="M0.8 0.8 L7.2 7.2 M7.2 0.8 L0.8 7.2" stroke="#e79aa4" stroke-width="1.05" fill="none"/></svg>
<div class="a" style="left:1483.3px;top:36px;width:2.4px;height:2.4px;background:#6a6a6a;border-radius:50%"></div>
<div class="a" style="left:1483.3px;top:40.6px;width:2.4px;height:2.4px;background:#6a6a6a;border-radius:50%"></div>
<div class="a" style="left:1483.3px;top:45.2px;width:2.4px;height:2.4px;background:#6a6a6a;border-radius:50%"></div>
<div class="a" style="left:386px;top:55px;width:1111px;height:22px;background:#f2f2f2;"></div>
<div class="a" style="left:386px;top:76px;width:1111px;height:1px;background:#dadada;"></div>
<div class="t" style="left:395.4px;top:57.8px;font-size:11.95px;color:#484848;">PageConf</div>
<div class="a" style="left:386px;top:77.6px;width:1111px;height:487px;background:#ffffff;"></div>
<div class="a" style="left:386px;top:77.6px;width:82px;height:487px;background:#f0f0f0;"></div>
<div class="a" style="left:468px;top:77.6px;width:1px;height:487px;background:#dcdcdc;"></div>
<div class="a" style="left:386px;top:77.6px;width:1.2px;height:487px;background:#e6e6e6;"></div>
<div class="a" style="left:387.2px;top:194.2px;width:80.8px;height:26.45px;background:#fcfaed;"></div>
<div class="a" style="left:475.4px;top:193.6px;width:1014.6px;height:211.2px;background:#a6d2ff;"></div>
<div class="a" style="left:475.4px;top:404.6px;width:9.3px;height:27.05px;background:#a6d2ff;"></div>
<div class="a" style="left:509.6px;top:300px;width:1px;height:79.35px;background:#c2dfff;"></div>
<div class="a" style="left:1486px;top:193.6px;width:11px;height:211.2px;background:#a6d2ff;"></div>
<div class="a" style="left:1487px;top:232.4px;width:10px;height:172.4px;background:#98bee8;"></div>
<div class="a" style="left:1487px;top:404.8px;width:10px;height:141.2px;background:#e0e0e0;"></div>
<div class="a" style="left:1482px;top:272.6px;width:14.6px;height:2.3px;background:#cccb55;"></div>
<div class="a" style="left:503.75px;top:141.7px;width:47.25px;height:25.05px;background:#f2e6bf;"></div>
<div class="a" style="left:386px;top:77.6px;width:1111px;height:487px;overflow:hidden">
<div class="ln" style="left:1px;top:-13.25px">8</div>
<div class="ln" style="left:1px;top:13.2px">9</div>
<div class="ln" style="left:1px;top:39.65px">10</div>
<div class="ln" style="left:1px;top:66.1px">11</div>
<div class="ln" style="left:1px;top:92.55px">12</div>
<div class="ln" style="left:1px;top:119px">13</div>
<div class="ln" style="left:1px;top:145.45px">14</div>
<div class="ln" style="left:1px;top:171.9px">15</div>
<div class="ln" style="left:1px;top:198.35px">16</div>
<div class="ln" style="left:1px;top:224.8px">17</div>
<div class="ln" style="left:1px;top:251.25px">18</div>
<div class="ln" style="left:1px;top:277.7px">19</div>
<div class="ln" style="left:1px;top:304.15px">20</div>
<div class="ln" style="left:1px;top:330.6px">21</div>
<div class="ln" style="left:1px;top:357.05px">22</div>
<div class="cl" style="left:89.4px;top:13.2px"><span class="c">/**</span></div>
<div class="cl" style="left:89.4px;top:39.65px"><span class="c"> * </span><span class="tag">@author</span><span class="c"> </span><span style="display:inline-block;transform:skewX(-14deg);color:#ababab;font-family:'Noto Serif CJK SC',serif;font-size:17.4px;letter-spacing:0.5px;line-height:20px;vertical-align:top;margin-top:1px;margin-left:3px">飞宇千虹</span></div>
<div class="cl" style="left:89.4px;top:66.1px"><span class="c"> * </span><span class="tag">@date</span><span class="c"> 2023-07-13 21:25</span></div>
<div class="cl" style="left:89.4px;top:92.55px"><span class="c"> */</span></div>
<div class="cl" style="left:89.4px;top:119px"><span class="an">@Configuration</span></div>
<div class="cl" style="left:89.4px;top:145.45px"><span class="k">public class</span> PageConf {</div>
<div class="cl" style="left:89.4px;top:171.9px">    <span class="an">@Bean</span></div>
<div class="cl" style="left:89.4px;top:198.35px">    <span class="k">public</span> MybatisPlusInterceptor <span class="m">mybatisPlusInterceptor</span>() {</div>
<div class="cl" style="left:89.4px;top:224.8px">        MybatisPlusInterceptor interceptor = <span class="k">new</span> MybatisPlusInterceptor();</div>
<div class="cl" style="left:89.4px;top:251.25px">        interceptor.addInnerInterceptor(<span class="k">new</span> PaginationInnerInterceptor(DbType.<span class="p">MYSQL</span>));</div>
<div class="cl" style="left:89.4px;top:277.7px">        <span class="k">return</span> interceptor;</div>
<div class="cl" style="left:89.4px;top:304.15px">    }</div>
<div class="cl" style="left:89.4px;top:330.6px">}</div>
</div>
<div class="a" style="left:475px;top:195.7px;width:1.8px;height:22.95px;background:#000;"></div>
<svg style="left:462.4px;top:96.2px" width="12" height="14" viewBox="0 0 12 14"><path d="M0.5 0.5 H11.5 V8.6 L6 13.5 L0.5 8.6 Z" fill="#fff" stroke="#cdcdcd" stroke-width="1"/><path d="M3.2 5 H8.8" stroke="#b4b4b4" stroke-width="1"/></svg>
<svg style="left:462.4px;top:174.2px" width="12" height="14" viewBox="0 0 12 14"><path d="M0.5 13.5 H11.5 V5.4 L6 0.5 L0.5 5.4 Z" fill="#fff" stroke="#cdcdcd" stroke-width="1"/><path d="M3.2 9 H8.8" stroke="#b4b4b4" stroke-width="1"/></svg>
<svg style="left:462.4px;top:281.575px" width="12" height="14" viewBox="0 0 12 14"><path d="M0.5 0.5 H11.5 V8.6 L6 13.5 L0.5 8.6 Z" fill="#fff" stroke="#cdcdcd" stroke-width="1"/><path d="M3.2 5 H8.8" stroke="#b4b4b4" stroke-width="1"/></svg>
<svg style="left:462.4px;top:385.375px" width="12" height="14" viewBox="0 0 12 14"><path d="M0.5 13.5 H11.5 V5.4 L6 0.5 L0.5 5.4 Z" fill="#fff" stroke="#cdcdcd" stroke-width="1"/><path d="M3.2 9 H8.8" stroke="#b4b4b4" stroke-width="1"/></svg>
<svg style="left:484px;top:179px" width="10" height="14" viewBox="0 0 10 14"><circle cx="4.8" cy="5" r="4.7" fill="#f0a31a"/><path d="M2.6 11.2 H7 M3.2 13 H6.4" stroke="#6e6e6e" stroke-width="1.1"/></svg>
<svg style="left:415.4px;top:198.425px" width="17" height="18" viewBox="0 0 17 18"><circle cx="8.4" cy="9" r="8.2" fill="#88c872"/><path d="M3 2.2 L13.8 15.4" stroke="#f2f6ee" stroke-width="1.7"/><path d="M9.2 3.4 L11.4 5.6 L15.6 1.2" stroke="#3c3f41" stroke-width="1.7" fill="none"/></svg>
<svg style="left:415.4px;top:222.875px" width="17" height="18" viewBox="0 0 17 18"><circle cx="8.4" cy="9" r="8.2" fill="#88c872"/><path d="M3 2.2 L13.8 15.4" stroke="#f2f6ee" stroke-width="1.7"/><path d="M11 14 H16.4 L13.7 17 Z" fill="#5a6068"/></svg>
<svg style="left:415.4px;top:250.925px" width="17" height="18" viewBox="0 0 17 18"><circle cx="8.4" cy="9" r="8.2" fill="#88c872"/><path d="M3 2.2 L13.8 15.4" stroke="#f2f6ee" stroke-width="1.7"/><path d="M8 13 H2 M4.4 10.6 L1.6 13 L4.4 15.4" stroke="#7e868e" stroke-width="1.6" fill="none"/></svg>
<svg style="left:435.8px;top:250.925px" width="17" height="18" viewBox="0 0 17 18"><circle cx="8.4" cy="9" r="8.2" fill="#88c872"/><path d="M3 2.2 L13.8 15.4" stroke="#f2f6ee" stroke-width="1.7"/><path d="M9.2 3.4 L11.4 5.6 L15.6 1.2" stroke="#3c3f41" stroke-width="1.7" fill="none"/></svg>
<svg style="left:1430px;top:84.5px" width="11.5" height="10.5" viewBox="0 0 11.5 10.5"><path d="M5.75 0.3 L11.3 10.2 H0.2 Z" fill="#f0c020"/><path d="M5.75 3.6 V7" stroke="#fff" stroke-width="1.3"/><circle cx="5.75" cy="8.6" r="0.75" fill="#fff"/></svg>
<div class="t" style="left:1444.5px;top:82px;font-size:11.95px;color:#8a8a8a;">1</div>
<svg style="left:1459.5px;top:86.5px" width="10" height="7" viewBox="0 0 10 7"><path d="M1 6 L5 1.6 L9 6" fill="none" stroke="#6e6e6e" stroke-width="1.3"/></svg>
<svg style="left:1479.5px;top:86.5px" width="10" height="7" viewBox="0 0 10 7"><path d="M1 1.2 L5 5.6 L9 1.2" fill="none" stroke="#6e6e6e" stroke-width="1.3"/></svg>
<div class="a" style="left:386px;top:564px;width:1111px;height:1px;background:#d6d6d6;"></div>
<div class="a" style="left:386px;top:565px;width:1111px;height:25px;background:#f6f6f6;"></div>
<div class="a" style="left:386px;top:590px;width:1111px;height:1px;background:#dadada;"></div>
<div class="t" style="left:391px;top:570px;font-size:12px;color:#2a2a2a;">运行:</div>
<svg style="left:435.5px;top:571.85px" width="15.2" height="13.3" viewBox="0 0 16 14"><path d="M0.8 8.4 C0.6 5.8 3 4.4 6.4 4.2 C9.6 4 11.6 3 12.6 0.8 C13.6 2.4 13.9 4 13.6 5.2 C11.4 5 9.6 5.4 8.4 6.6 C7.2 9.4 5.4 11.4 2.8 11.4 C1.5 11.2 0.9 10 0.8 8.4 Z" fill="#86c06f"/><circle cx="10.9" cy="10.2" r="3.1" fill="#f4f6f6" stroke="#8a9299" stroke-width="1"/><path d="M10 8.8 L12.4 10.2 L10 11.6 Z" fill="#9aa2a8"/></svg>
<div class="a" style="left:446px;top:581.2px;width:4.4px;height:4.4px;background:#3fbf4a;border-radius:50%"></div>
<div class="t" style="left:454px;top:570px;font-size:11.95px;color:#2a2a2a;letter-spacing:0.25px;">DemoApplication</div>
<svg style="left:554.7px;top:574.5px" width="8" height="8" viewBox="0 0 8 8"><path d="M0.8 0.8 L7.2 7.2 M7.2 0.8 L0.8 7.2" stroke="#e79aa4" stroke-width="1.05" fill="none"/></svg>
<div class="a" style="left:423.5px;top:587.6px;width:149px;height:2.6px;background:#a6aab3;"></div>
<svg style="left:1452.9px;top:571.4px" width="12.2" height="12.2" viewBox="0 0 12.2 12.2"><path d="M4.66 2.26 L4.77 0.66 L7.43 0.66 L7.54 2.26 L8.70 2.93 L10.15 2.23 L11.48 4.53 L10.15 5.43 L10.15 6.77 L11.48 7.67 L10.15 9.97 L8.70 9.27 L7.54 9.94 L7.43 11.54 L4.77 11.54 L4.66 9.94 L3.50 9.27 L2.05 9.97 L0.72 7.67 L2.05 6.77 L2.05 5.43 L0.72 4.53 L2.05 2.23 L3.50 2.93 Z M4.30 6.10 a1.80 1.80 0 1 0 3.60 0 a1.80 1.80 0 1 0 -3.60 0 Z" fill="#626262" fill-rule="evenodd" stroke="#626262" stroke-width="0.8" stroke-linejoin="round"/></svg>
<div class="a" style="left:1478.3px;top:577px;width:11.7px;height:2px;background:#5e5e5e;"></div>
<div class="a" style="left:386px;top:591px;width:1111px;height:26.5px;background:#f2f2f2;"></div>
<div class="a" style="left:413px;top:617.2px;width:1084px;height:1px;background:#d6d6d6;"></div>
<div class="a" style="left:412.6px;top:591px;width:1px;height:77px;background:#dcdcdc;"></div>
<div class="t" style="left:425px;top:597px;font-size:10.6px;color:#1a1a1a;">控制台</div>
<div class="a" style="left:413.4px;top:615.6px;width:55.5px;height:2.4px;background:#a6aab3;"></div>
<svg style="left:480px;top:597px" width="15" height="14" viewBox="0 0 15 14"><path d="M2.6 11.4 L7 2.6 L12.4 11.4 M7 9.8 L2.6 11.4" stroke="#f0a88a" stroke-width="1.2" fill="none"/><circle cx="7" cy="2.8" r="2.2" fill="#ee7f52"/><circle cx="2.6" cy="11.4" r="2.2" fill="#ee7f52"/><circle cx="12.4" cy="11.4" r="2.2" fill="#ee7f52"/></svg>
<div class="t" style="left:498.7px;top:596.9px;font-size:12px;color:#2a2a2a;letter-spacing:-0.15px;">Actuator</div>
<div class="a" style="left:386px;top:591px;width:26.6px;height:77px;background:#f2f2f2;"></div>
<svg style="left:392.5px;top:598px" width="13" height="13" viewBox="0 0 13 13"><path d="M10 6.6 A4.4 4.4 0 1 1 6.8 2.3" fill="none" stroke="#4a9a50" stroke-width="1.7"/><path d="M6 0 L10.4 2.6 L6 5.4 Z" fill="#4a9a50"/><rect x="7.8" y="8.6" width="4.4" height="4.4" fill="#8a8a8a"/></svg>
<svg style="left:392.5px;top:622px" width="13" height="13" viewBox="0 0 13 13"><path d="M1.2 11.8 L6.4 6.6 M6 7 C5 4.4 7 1.4 10.4 1.6 L8.4 3.8 L9.4 5.4 L11.2 5.2 L12.6 3.4 C13 6.6 10.4 8.6 7.8 7.6" stroke="#626262" stroke-width="2.3" fill="none"/></svg>
<div class="a" style="left:390px;top:643.6px;width:18px;height:1px;background:#d6d6d6;"></div>
<div class="a" style="left:394px;top:654px;width:10px;height:10px;background:#e0515c;"></div>
<div class="a" style="left:413.6px;top:618.2px;width:25.4px;height:50px;background:#f2f2f2;"></div>
<div class="a" style="left:439px;top:618.2px;width:1px;height:50px;background:#e2e2e2;"></div>
<div class="a" style="left:440px;top:618.2px;width:1057px;height:50px;background:#ffffff;"></div>
<svg style="left:420.5px;top:626px" width="13" height="13" viewBox="0 0 13 13"><path d="M3 7.8 L10.6 0.8 L12.2 2.4 L5.6 9 Z" fill="#d0464f"/><path d="M0.4 11 H12.6" stroke="#d0464f" stroke-width="2"/></svg>
<svg style="left:422px;top:652px" width="10" height="11" viewBox="0 0 10 11"><path d="M5 10.6 V1.2 M1 5 L5 1 L9 5" stroke="#d0464f" stroke-width="1.5" fill="none"/></svg>
<div class="co" style="top:617.7px">&lt;==        Row: 27, 71948596357890072, <span class="cj">安徽</span>, [<span class="cj">安徽一区</span>, <span class="cj">安徽二区</span>]</div>
<div class="co" style="top:643.9px">&lt;==        Row: 28, 71948596357890072, <span class="cj">山东</span>, [<span class="cj">山东一区</span>, <span class="cj">山东二区</span>]</div>
<div class="t" style="left:1332.4px;top:628.2px;font-size:17.9px;font-weight:300;line-height:22px;height:22px;color:#dcdcdc;-webkit-text-stroke:0.95px #939393;paint-order:stroke fill;letter-spacing:0px">@稀土掘金技术社区</div>
<div class="a" style="left:1497px;top:29px;width:15px;height:639px;background:#f2f2f2;"></div>
<div class="a" style="left:1496px;top:29px;width:1px;height:639px;background:#d6d6d6;"></div>
<div class="a" style="left:1500px;top:51.5px;width:12px;height:2.5px;background:#aab4c8;"></div>
<div class="a" style="left:1497px;top:54px;width:15px;height:1px;background:#d4d4d4;"></div>
<svg style="left:1503px;top:59.5px" width="12" height="13" viewBox="0 0 12 13"><path d="M6 0.6 L11.4 3.6 V9.6 L6 12.6 L0.6 9.6 V3.6 Z" fill="none" stroke="#e0707c" stroke-width="1.2"/><circle cx="6" cy="6.6" r="1.8" fill="none" stroke="#e0707c" stroke-width="1.1"/></svg>
<div class="a" style="left:1497px;top:76px;width:15px;height:1px;background:#dadada;"></div>
<div class="a" style="left:1500px;top:83px;width:20px;height:24px;background:#fff;border:1px solid #d0d0d0;border-radius:3px"></div>
<div class="a" style="left:1506.5px;top:89px;width:12px;height:12px;background:#c9bdf0;border-radius:50%"></div>
<div class="a" style="left:1500px;top:118.6px;width:14px;height:21.4px;background:#1fa672;border-radius:2px"></div>
<div class="t" style="left:1505.5px;top:121.5px;font-size:11.5px;color:#0c3c2a;">P</div>
<div class="a" style="left:1497px;top:203.2px;width:15px;height:2.5px;background:#3f79b8;"></div>
<div class="t" style="left:1500.8px;top:212.3px;font-size:11px;color:#222;">JS</div>
<div class="a" style="left:1497px;top:233.5px;width:15px;height:2.6px;background:#3f79b8;"></div>
<div class="t" style="left:1500.8px;top:242px;font-size:11px;color:#222;">Pa</div>
<div class="a" style="left:1497px;top:264.2px;width:15px;height:2.7px;background:#3f79b8;"></div>
<div class="a" style="left:1497px;top:266.9px;width:15px;height:402px;background:#f5f5f5;"></div>
<div class="a" style="left:1496.6px;top:266.9px;width:1.8px;height:402px;background:#a2a2a2;"></div>
<div class="a" style="left:1498.4px;top:487px;width:13.6px;height:20px;background:#fcfaed;"></div>
<div class="t" style="left:1508.3px;top:269.5px;font-size:10.3px;color:#bdbdbd;">1</div>
<div class="t" style="left:1508.3px;top:289.45px;font-size:10.3px;color:#bdbdbd;">2</div>
<div class="t" style="left:1508.3px;top:309.4px;font-size:10.3px;color:#bdbdbd;">3</div>
<div class="t" style="left:1508.3px;top:329.35px;font-size:10.3px;color:#bdbdbd;">4</div>
<div class="t" style="left:1508.3px;top:349.3px;font-size:10.3px;color:#bdbdbd;">5</div>
<div class="t" style="left:1508.3px;top:369.25px;font-size:10.3px;color:#bdbdbd;">6</div>
<div class="t" style="left:1508.3px;top:389.2px;font-size:10.3px;color:#bdbdbd;">7</div>
<div class="t" style="left:1508.3px;top:409.15px;font-size:10.3px;color:#bdbdbd;">8</div>
<div class="t" style="left:1508.3px;top:429.1px;font-size:10.3px;color:#bdbdbd;">9</div>
<div class="t" style="left:1503.4px;top:449.05px;font-size:10.3px;color:#bdbdbd;">10</div>
<div class="t" style="left:1503.4px;top:469px;font-size:10.3px;color:#bdbdbd;">11</div>
<div class="t" style="left:1503.4px;top:488.95px;font-size:10.3px;color:#bdbdbd;">12</div>
<div class="a" style="left:172.3px;top:219.6px;width:85px;height:28.4px;border:2.1px solid #d9303a"></div>
<svg style="left:0px;top:0px" width="1512" height="668" viewBox="0 0 1512 668"><g fill="none" stroke="#dc3a42" stroke-width="1.35" stroke-linejoin="miter"><path d="M265 233.2 L449 257.8"/><path d="M265.3 235 L447.6 261.2"/><path d="M449.4 256 L456 260.5 L447.4 263.3 Z"/></g></svg>
</body></html>
